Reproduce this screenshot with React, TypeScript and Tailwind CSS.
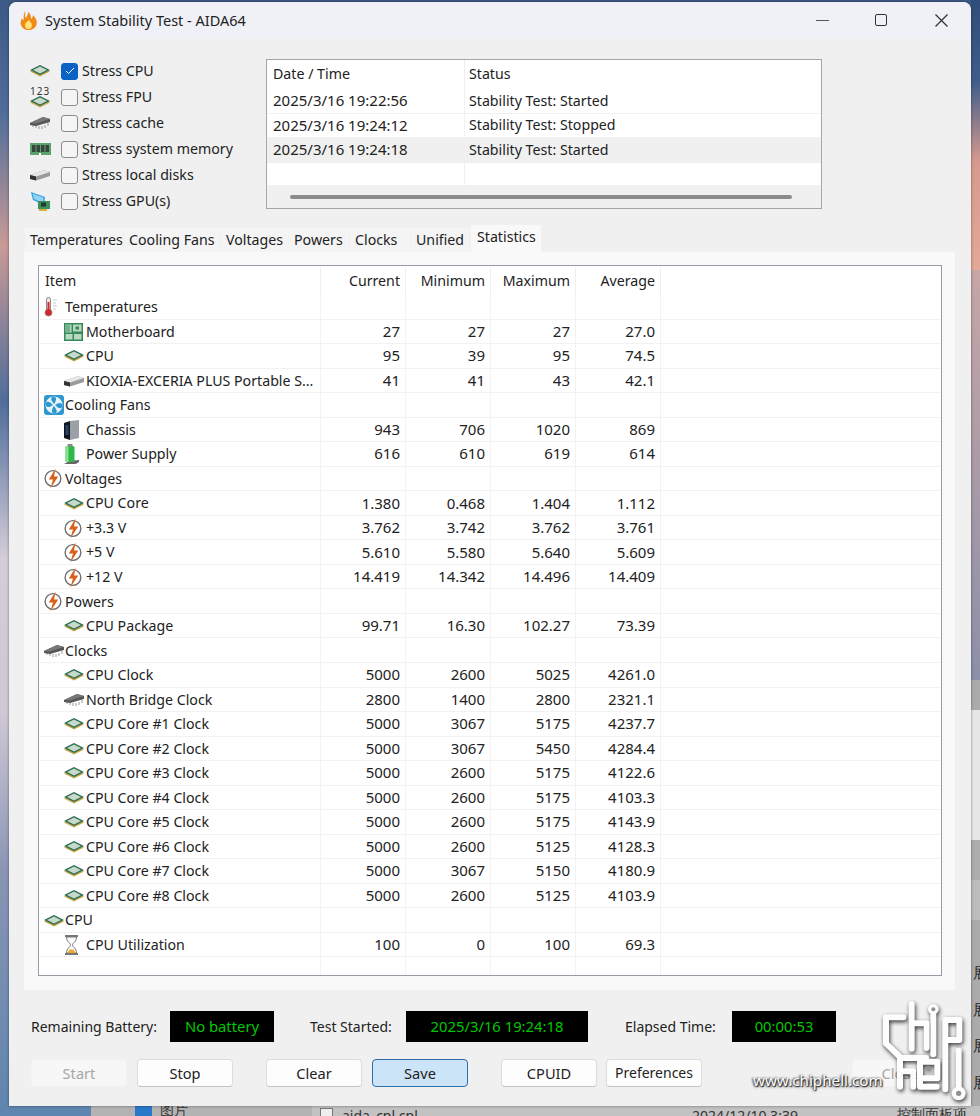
// App.tsx - AIDA64 System Stability Test window on a desktop
import React from 'react'

const FONT = 'font-["Noto_Sans","Open_Sans",sans-serif]'

const Chip = () => (
  <svg width="20" height="12" viewBox="0 0 20 12">
    <polygon points="10,1.500 20,6.500 10,11.500 0,6.500" fill="#c9a94e" />
    <polygon points="10,0 20,5 10,10 0,5" fill="#2f6d50" />
    <polygon points="10,1.500 17,5 10,8.500 3,5" fill="#c6dacb" />
  </svg>
)

const DarkChip = () => (
  <svg width="20" height="14" viewBox="0 0 20 14">
    <path d="M3 8v3M6 9v3M9 10v3M12 10v3M15 9v3M18 7v3" stroke="#999" strokeWidth="1" />
    <polygon points="0,7 13,1 20,3 20,6 6,10 0,9" fill="#555" />
    <polygon points="0,7 13,1 20,3 6,7.500" fill="#777" />
  </svg>
)

const Disk = () => (
  <svg width="20" height="12" viewBox="0 0 20 12">
    <polygon points="0,6 14,1 20,3 20,7 6,11.500 0,10" fill="#9a9a9a" />
    <polygon points="0,6 14,1 20,3 6,7.500" fill="#e6e6e6" />
    <polygon points="0,6 6,7.500 6,11.500 0,10" fill="#333" />
  </svg>
)

const Ram = () => (
  <svg width="21" height="13" viewBox="0 0 21 13">
    <rect x="0" y="0" width="21" height="12" fill="#5aa36f" />
    <path d="M2 2h3.500v7H2zM6.500 2H10v7H6.500zM11 2h3.500v7H11zM15.500 2H19v7h-3.500z" fill="#37463c" />
    <rect x="9" y="10" width="2" height="3" fill="#fff" />
  </svg>
)

const Gpu = () => (
  <svg width="20" height="21" viewBox="0 0 20 21">
    <polygon points="1,1 15,6 14,14 3,9" fill="#2f9fe0" />
    <polygon points="2.500,2.500 13.500,6.500 13,12 4,8" fill="#8fd2f4" />
    <rect x="8" y="10" width="12" height="8" fill="#3f8f5a" />
    <rect x="11" y="11.500" width="5" height="4" fill="#1f3d2c" />
    <rect x="9" y="18" width="8" height="2" fill="#d8b13c" />
  </svg>
)

const Flame = () => (
  <svg width="18" height="19" viewBox="0 0 18 19">
    <path d="M5 0c1 3-1 4 1 7 1-2 2-3 2-6 3 2 3 5 3 7 1-1 2-2 2-4 3 3 5 7 3 11-1 2-4 4-7 4-4 0-7-2-8-5-1-2 0-5 1-7 0 1 1 2 2 2C3 6 4 3 5 0z" fill="#f08a12" />
    <path d="M9 9c1 2 3 3 3 5 0 2-1 4-3.500 4S5 16 5 14c0-2 2-3 4-5z" fill="#ffe27a" />
  </svg>
)

const Thermometer = () => (
  <svg width="14" height="20" viewBox="0 0 14 20">
    <rect x="2.500" y="0.500" width="4" height="14" rx="2" fill="#f2e4e4" stroke="#8a8a8a" />
    <circle cx="4.500" cy="15.500" r="3.500" fill="#d6262a" stroke="#8a8a8a" strokeWidth="0.700" />
    <rect x="3.500" y="5" width="2" height="10" fill="#d6262a" />
    <path d="M9 3h4M9 6h3M9 9h4M9 12h3" stroke="#bbb" strokeWidth="0.800" />
  </svg>
)

const Board = () => (
  <svg width="19" height="18" viewBox="0 0 19 18">
    <rect width="19" height="18" fill="#358a58" />
    <rect x="1.500" y="1.500" width="6" height="8" fill="#b9d8c4" />
    <path d="M3 2v7M5 2v7" stroke="#358a58" />
    <rect x="9" y="1.500" width="8.500" height="7" fill="#b9d8c4" />
    <rect x="11.500" y="3.500" width="3.500" height="3" fill="#358a58" />
    <rect x="1.500" y="11" width="7" height="5.500" fill="#b9d8c4" />
    <rect x="10" y="11" width="7.500" height="5.500" fill="#b9d8c4" />
  </svg>
)

const Fan = () => (
  <svg width="20" height="20" viewBox="0 0 20 20">
    <rect width="20" height="20" rx="3" fill="#2f97cf" />
    <circle cx="10" cy="10" r="8.500" fill="#e9f4fa" />
    <path d="M10 9C8 6 6 4 8 2c2-1 5 0 4 3-.5 1.500-1 3-2 4zM11 10c3-2 5-3 7-1 1 2 0 5-3 4-1.500-.5-3-2-4-3zM10 11c2 3 4 5 2 7-2 1-5 0-4-3 .5-1.500 1-3 2-4zM9 10c-3 2-5 3-7 1-1-2 0-5 3-4 1.500.5 3 2 4 3z" fill="#2f97cf" />
  </svg>
)

const Chassis = () => (
  <svg width="16" height="20" viewBox="0 0 16 20">
    <polygon points="0,3 6,1 6,20 0,18" fill="#12161c" />
    <polygon points="6,1 15,0 15,18 6,20" fill="#9aa0a6" />
    <path d="M1.500 6h3M1.500 8h3M1.500 10h3M1.500 12h3M1.500 14h3" stroke="#3a6fc0" />
  </svg>
)

const Psu = () => (
  <svg width="16" height="21" viewBox="0 0 16 21">
    <path d="M4 17c-1 2-3 2-4 3h10c3 0 6-2 5-4" fill="#666" />
    <rect x="1.500" y="2" width="9" height="16" rx="1.500" fill="#2fb84a" />
    <rect x="1.500" y="2" width="3" height="16" fill="#8be08f" />
    <rect x="3.500" y="0" width="5" height="2.500" fill="#8a8a8a" />
  </svg>
)

const Bolt = () => (
  <svg width="19" height="21" viewBox="0 0 18 20">
    <circle cx="8.500" cy="10" r="7.500" fill="#fff" stroke="#6e6e6e" strokeWidth="1.300" />
    <polygon points="11,0.500 4.500,11 8.500,11 6,19.500 13.500,8 9.500,8" fill="#d9601a" />
  </svg>
)

const Hourglass = () => (
  <svg width="15" height="20" viewBox="0 0 15 20">
    <path d="M1 1h13M1 19h13" stroke="#777" strokeWidth="2" />
    <path d="M2.500 2c0 5 4 6 4 8s-4 3-4 8h10c0-5-4-6-4-8s4-3 4-8z" fill="#fbfbfb" stroke="#777" />
    <polygon points="3.500,18 11.500,18 9.500,14.500 5.500,14.500" fill="#f0a92a" />
  </svg>
)

type IconName = 'chip' | 'dark' | 'disk' | 'temp' | 'board' | 'fan' | 'chassis' | 'psu' | 'bolt' | 'hour'

const icons: Record<IconName, React.ReactNode> = {
  chip: <Chip />,
  dark: <DarkChip />,
  disk: <Disk />,
  temp: <Thermometer />,
  board: <Board />,
  fan: <Fan />,
  chassis: <Chassis />,
  psu: <Psu />,
  bolt: <Bolt />,
  hour: <Hourglass />,
}

type Row = { name: string; icon: IconName; group?: boolean; vals?: string[] }

const rows: Row[] = [
  { name: 'Temperatures', icon: 'temp', group: true },
  { name: 'Motherboard', icon: 'board', vals: ['27', '27', '27', '27.0'] },
  { name: 'CPU', icon: 'chip', vals: ['95', '39', '95', '74.5'] },
  { name: 'KIOXIA-EXCERIA PLUS Portable S...', icon: 'disk', vals: ['41', '41', '43', '42.1'] },
  { name: 'Cooling Fans', icon: 'fan', group: true },
  { name: 'Chassis', icon: 'chassis', vals: ['943', '706', '1020', '869'] },
  { name: 'Power Supply', icon: 'psu', vals: ['616', '610', '619', '614'] },
  { name: 'Voltages', icon: 'bolt', group: true },
  { name: 'CPU Core', icon: 'chip', vals: ['1.380', '0.468', '1.404', '1.112'] },
  { name: '+3.3 V', icon: 'bolt', vals: ['3.762', '3.742', '3.762', '3.761'] },
  { name: '+5 V', icon: 'bolt', vals: ['5.610', '5.580', '5.640', '5.609'] },
  { name: '+12 V', icon: 'bolt', vals: ['14.419', '14.342', '14.496', '14.409'] },
  { name: 'Powers', icon: 'bolt', group: true },
  { name: 'CPU Package', icon: 'chip', vals: ['99.71', '16.30', '102.27', '73.39'] },
  { name: 'Clocks', icon: 'dark', group: true },
  { name: 'CPU Clock', icon: 'chip', vals: ['5000', '2600', '5025', '4261.0'] },
  { name: 'North Bridge Clock', icon: 'dark', vals: ['2800', '1400', '2800', '2321.1'] },
  { name: 'CPU Core #1 Clock', icon: 'chip', vals: ['5000', '3067', '5175', '4237.7'] },
  { name: 'CPU Core #2 Clock', icon: 'chip', vals: ['5000', '3067', '5450', '4284.4'] },
  { name: 'CPU Core #3 Clock', icon: 'chip', vals: ['5000', '2600', '5175', '4122.6'] },
  { name: 'CPU Core #4 Clock', icon: 'chip', vals: ['5000', '2600', '5175', '4103.3'] },
  { name: 'CPU Core #5 Clock', icon: 'chip', vals: ['5000', '2600', '5175', '4143.9'] },
  { name: 'CPU Core #6 Clock', icon: 'chip', vals: ['5000', '2600', '5125', '4128.3'] },
  { name: 'CPU Core #7 Clock', icon: 'chip', vals: ['5000', '3067', '5150', '4180.9'] },
  { name: 'CPU Core #8 Clock', icon: 'chip', vals: ['5000', '2600', '5125', '4103.9'] },
  { name: 'CPU', icon: 'chip', group: true },
  { name: 'CPU Utilization', icon: 'hour', vals: ['100', '0', '100', '69.3'] },
]

const stress: { label: string; icon: React.ReactNode; checked?: boolean }[] = [
  { label: 'Stress CPU', icon: <Chip />, checked: true },
  {
    label: 'Stress FPU',
    icon: (
      <div className="flex flex-col items-center">
        <span className="text-[10px] leading-[9px] tracking-[1px] text-[#333]">123</span>
        <Chip />
      </div>
    ),
  },
  { label: 'Stress cache', icon: <DarkChip /> },
  { label: 'Stress system memory', icon: <Ram /> },
  { label: 'Stress local disks', icon: <Disk /> },
  { label: 'Stress GPU(s)', icon: <Gpu /> },
]

const tabs = [
  { label: 'Temperatures', w: 'w-[98px]' },
  { label: 'Cooling Fans', w: 'w-[96px]' },
  { label: 'Voltages', w: 'w-[67px]' },
  { label: 'Powers', w: 'w-[60px]' },
  { label: 'Clocks', w: 'w-[60px]' },
  { label: 'Unified', w: 'w-[59px]' },
]

const log = [
  ['2025/3/16 19:22:56', 'Stability Test: Started'],
  ['2025/3/16 19:24:12', 'Stability Test: Stopped'],
  ['2025/3/16 19:24:18', 'Stability Test: Started'],
]

const btnKinds = {
  normal: 'border-[#dcdcdc] border-b-[#c4c4c4] bg-[#fdfdfd]',
  disabled: 'border-[#f3f3f3] bg-[#f7f7f7] text-[#a6a6a6]',
  focus: 'border-[#2f6ea8] bg-[#cce4f7]',
}

const Btn = ({ label, kind = 'normal', className = '' }: { label: string; kind?: keyof typeof btnKinds; className?: string }) => (
  <div className={`flex h-[28px] w-[96px] items-center justify-center rounded-[4px] border ${btnKinds[kind]} ${className}`}>
    {label}
  </div>
)

const Led = ({ text, className }: { text: string; className: string }) => (
  <div className={`flex h-[31px] items-center justify-center bg-black text-[14.800px] text-[#00c800] ${className}`}>{text}</div>
)

const ChipHellLogo = () => (
  <svg width="110" height="126" viewBox="0 0 330 378" fill="none" className="opacity-90 drop-shadow-[1px_2px_2px_rgba(0,0,0,0.85)]">
    <g stroke="#fff" strokeWidth="18" strokeLinejoin="round" strokeLinecap="round">
      <path d="M100 82H48v78l45 44h75" />
      <path d="M125 42v134M125 100h45v74" />
      <path d="M190 75v118" />
      <path d="M226 90h42v60h-42M226 90v112" />
      <path d="M90 208v82M90 244h40v46" />
      <path d="M150 290v-75h52v50h-52M150 290h50" />
      <path d="M226 210v88" />
      <path d="M266 182v112" />
    </g>
    <circle cx="190" cy="58" r="16" fill="#fff" />
    <circle cx="190" cy="58" r="6" fill="#888" />
    <circle cx="266" cy="310" r="21" fill="#fff" />
    <circle cx="266" cy="310" r="8" fill="#888" />
    <circle cx="175" cy="236" r="7" fill="#888" />
  </svg>
)

export default function App() {
  return (
    <div className={`relative h-[1116px] w-[980px] overflow-hidden bg-[linear-gradient(180deg,#3d5a86_0%,#4f6d99_10%,#c99a97_22%,#4f6d9a_36%,#d5cdd8_50%,#cfc8d5_64%,#8a95b4_78%,#5e85ae_100%)] text-[14.200px] leading-none text-[#222] ${FONT}`}>
      {/* right edge: the desktop behind, then an explorer window peeking out */}
      <div className="absolute right-0 top-0 h-[270px] w-[9px] bg-[linear-gradient(180deg,#2f4d78_0%,#3f5d8a_30%,#d79a8f_60%,#e3a897_100%)]" />
      <div className="absolute right-0 top-[270px] h-[410px] w-[9px] bg-[linear-gradient(180deg,#c7a6a6_0%,#8c8fa9_100%)]" />
      <div className="absolute right-0 top-[680px] flex h-[426px] w-[9px] flex-col overflow-hidden bg-[#ababab] text-[15px]">
        <div className="h-[30px] shrink-0" />
        <div className="h-[130px] shrink-0 bg-[#e6e6e6]" />
        <div className="h-[40px] shrink-0 bg-[#adadad]" />
        <div className="h-[40px] shrink-0 bg-[#bcbcbc]" />
        <div className="flex flex-col gap-[21.700px] pl-[2px] pt-[45px]">
          <span>展</span>
          <span>展</span>
          <span>展</span>
          <span>展</span>
        </div>
      </div>
      {/* strip of explorer window under the dialog */}
      <div className="absolute bottom-0 left-[91px] right-0 flex h-[10px] items-start overflow-hidden bg-[#c2c2c2] text-[14px] text-[#333]">
        <div className="flex h-full w-[221px] bg-[#b3b3b3] pl-[44px]">
          <div className="h-[10px] w-[17px] bg-[#2a78c8]" />
          <span className="ml-[8px] -mt-[3px]">图片</span>
        </div>
        <div className="ml-[8px] mt-[2px] h-[10px] w-[13px] border border-[#777] bg-[#eee]" />
        <span className="ml-[9px] mt-[3px]">aida_cpl.cpl</span>
        <span className="absolute left-[601px] top-[3px]">2024/12/10 3:39</span>
        <span className="absolute left-[806px] top-[1px]">控制面板项</span>
      </div>

      {/* dialog */}
      <div className="absolute left-[9px] top-[2px] flex h-[1104px] w-[962px] flex-col overflow-hidden rounded-t-[8px] bg-[#f0f0f0] shadow-[0_0_3px_rgba(0,0,0,0.45)]">
        <div className="flex h-[36px] shrink-0 items-center bg-[#eff1f7] pl-[11px]">
          <Flame />
          <span className="ml-[7px] text-[14.500px]">System Stability Test - AIDA64</span>
          <div className="ml-auto flex items-center pr-[23px]">
            <div className="mr-[46px] h-[1px] w-[13px] bg-[#555]" />
            <div className="mr-[48px] h-[12px] w-[12px] rounded-[2px] border-[1.500px] border-[#333]" />
            <svg width="13" height="13" viewBox="0 0 13 13" stroke="#333" strokeWidth="1.300">
              <path d="M0.500 0.500l12 12M12.500 0.500l-12 12" />
            </svg>
          </div>
        </div>

        <div className="flex h-[188px] shrink-0 pt-[21px]">
          <div className="-mt-[1px] flex w-[257px] flex-col pl-[21px]">
            {stress.map(s => (
              <div key={s.label} className="flex h-[26px] items-center">
                <div className="flex w-[31px] justify-start">{s.icon}</div>
                <div className={`flex h-[17px] w-[17px] items-center justify-center rounded-[3px] border ${s.checked ? 'border-[#0a63c4] bg-[#0a63c4]' : 'border-[#8b8b8b] bg-[#f5f5f5]'}`}>
                  {s.checked && (
                    <svg width="10" height="8" viewBox="0 0 10 8" fill="none" stroke="#fff" strokeWidth="1">
                      <path d="M1 4l2.500 2.500L9 1" />
                    </svg>
                  )}
                </div>
                <span className="ml-[4px]">{s.label}</span>
              </div>
            ))}
          </div>
          <div className="flex h-[150px] w-[556px] flex-col border border-[#a6a6a6] bg-white">
            <div className="flex h-[29px] shrink-0 items-center">
              <div className="flex h-full w-[198px] items-center border-r border-[#efefef] pl-[6px]">Date / Time</div>
              <div className="pl-[4px]">Status</div>
            </div>
            {log.map((r, i) => (
              <div key={r[0]} className={`flex h-[24.500px] shrink-0 items-center border-b ${i === 2 ? 'border-[#f0f0f0] bg-[#f0f0f0]' : 'border-[#f0f0f0]'}`}>
                <div className="flex h-full w-[198px] items-center border-r border-[#f0f0f0] pl-[6px] text-[15px]">{r[0]}</div>
                <div className="pl-[4px]">{r[1]}</div>
              </div>
            ))}
            <div className="flex flex-1">
              <div className="w-[198px] border-r border-[#f0f0f0]" />
            </div>
            <div className="flex h-[23px] shrink-0 items-center bg-[#f0f0f0] pl-[23px]">
              <div className="h-[4px] w-[502px] rounded-full bg-[#8b8b8b]" />
            </div>
          </div>
        </div>

        {/* tabs */}
        <div className="ml-[16px] flex h-[26px] shrink-0 items-end gap-[1px]">
          {tabs.map(t => (
            <div key={t.label} className={`flex h-[24px] items-center bg-[#f4f4f4] pl-[5px] ${t.w}`}>{t.label}</div>
          ))}
          <div className="flex h-[27px] w-[70px] items-start bg-[#f9f9f9] pl-[6px] pt-[5px]">Statistics</div>
        </div>

        <div className="ml-[15px] h-[738px] w-[931px] shrink-0 bg-[#f9f9f9] pl-[14px] pt-[13px]">
          <div className="flex h-[711px] w-[904px] flex-col border border-[#9a9aa6] bg-white">
            <div className="flex h-[29px] shrink-0 items-center pt-[1px]">
              <div className="flex h-full w-[282px] items-center border-r border-[#efefef] pl-[6px]">Item</div>
              {['Current', 'Minimum', 'Maximum', 'Average'].map(h => (
                <div key={h} className="flex h-full w-[85px] items-center justify-end border-r border-[#efefef] pr-[5px]">{h}</div>
              ))}
            </div>
            {rows.map((r, i) => (
              <div key={i} className="flex h-[24.540px] shrink-0 items-center border-b border-[#f2f2f2]">
                <div className={`flex h-full w-[282px] items-center overflow-hidden whitespace-nowrap border-r border-[#f2f2f2] pt-[1px] ${r.group ? 'pl-[5px]' : 'pl-[25px]'}`}>
                  <div className={`flex shrink-0 items-center justify-start ${r.group ? 'w-[21px]' : 'w-[22px]'}`}>{icons[r.icon]}</div>
                  <span>{r.name}</span>
                </div>
                {[0, 1, 2, 3].map(c => (
                  <div key={c} className="flex h-full w-[85px] items-center justify-end border-r border-[#f2f2f2] pr-[5px] text-[15px]">{r.vals?.[c]}</div>
                ))}
              </div>
            ))}
            <div className="flex flex-1">
              <div className="w-[282px] border-r border-[#f2f2f2]" />
              <div className="w-[85px] border-r border-[#f2f2f2]" />
              <div className="w-[85px] border-r border-[#f2f2f2]" />
              <div className="w-[85px] border-r border-[#f2f2f2]" />
              <div className="w-[85px] border-r border-[#f2f2f2]" />
            </div>
          </div>
        </div>

        <div className="mt-[21px] flex shrink-0 items-center pl-[22px] text-[14px]">
          <span className="w-[139px]">Remaining Battery:</span>
          <Led text="No battery" className="w-[104px]" />
          <span className="ml-[36px] w-[96px]">Test Started:</span>
          <Led text="2025/3/16 19:24:18" className="w-[182px]" />
          <span className="ml-[37px] w-[107px]">Elapsed Time:</span>
          <Led text="00:00:53" className="w-[104px]" />
        </div>

        <div className="mt-[17px] flex shrink-0 pl-[22px] text-[14.600px]">
          <Btn label="Start" kind="disabled" />
          <Btn label="Stop" className="ml-[10px]" />
          <Btn label="Clear" className="ml-[33px]" />
          <Btn label="Save" kind="focus" className="ml-[10px]" />
          <Btn label="CPUID" className="ml-[33px]" />
          <Btn label="Preferences" className="ml-[9px] text-[14px]" />
          <Btn label="Close" kind="disabled" className="ml-[150px]" />
        </div>
      </div>

      {/* chiphell watermark over everything */}
      <div className="absolute left-[870px] top-[990px]">
        <ChipHellLogo />
      </div>
      <span className="absolute left-[753px] top-[1073px] text-[15.200px] text-white [text-shadow:1px_1px_1px_#222,-1px_0_2px_#444,0_1px_3px_#444]">www.chiphell.com</span>
    </div>
  )
}
